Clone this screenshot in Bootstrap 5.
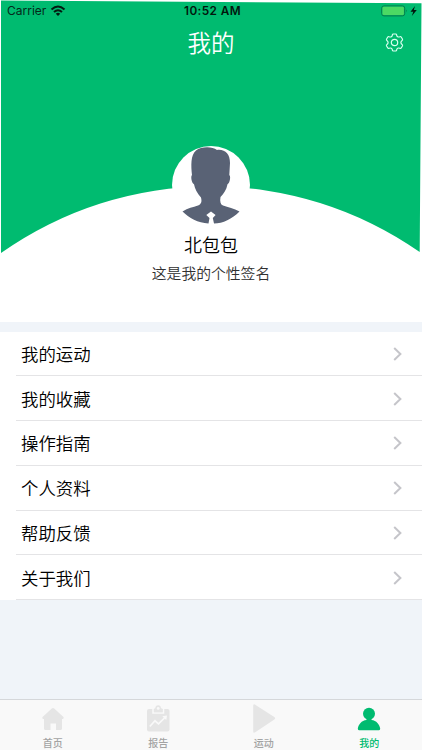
<!DOCTYPE html>
<html lang="zh-CN">
<head>
<meta charset="utf-8">
<meta name="viewport" content="width=device-width, initial-scale=1">
<title>我的</title>
<link href="https://cdn.jsdelivr.net/npm/bootstrap@5.3.0/dist/css/bootstrap.min.css" rel="stylesheet">
<style>
body{font-family:"Noto Sans CJK SC",sans-serif;background:#f0f4f9;color:#000;height:750px;overflow:hidden}
.screen{height:750px}
.hero{height:321.5px;background:#fff}
.hero-bg{left:0;top:0;z-index:0}
.hero>*:not(.hero-bg){position:relative;z-index:1}
.status{height:22px;font-family:Inter,sans-serif;font-size:12px;line-height:22px;color:#04291a;padding:0 4px 0 7px}
.status>div{flex:1 1 0}
.clock{font-weight:600;font-size:11.8px;letter-spacing:.4px;color:#02170e}
.titlebar{height:41px;padding:0 18px}
.titlebar>*{flex:1 1 0}
.page-title{font-size:23.5px;font-weight:350;line-height:41px;color:#fff}
.avatar{width:78px;height:78px;margin-top:83px}
.nick{font-size:18px;font-weight:350;line-height:26px;margin-top:7px}
.sign{font-size:14.8px;font-weight:350;line-height:22px;color:#303030;margin-top:5px}
.menu{margin-top:10px;background:#fff;border-radius:0}
.menu-row{height:44.8px;padding:0 20px 0 21px;font-size:17.4px;font-weight:350;line-height:26px;background:linear-gradient(#e4e4e6,#e4e4e6) 16px 100%/100% 1px no-repeat #fff;border:0;color:#000}
.tabs{height:51px;background:#f9f9f9;border-top:1px solid #d5d7da}
.tab-item{flex:1 1 0;color:#a3a3a3;font-size:10px;line-height:14px;font-weight:500;text-decoration:none}
.tab-item svg{display:block;margin-top:3px;color:#e5e5e5}
.tab-item span{margin-top:3px}
.tab-item.on,.tab-item.on svg{color:#00bb70}
</style>
<script src="https://cdn.jsdelivr.net/npm/bootstrap@5.3.0/dist/js/bootstrap.bundle.min.js"></script>
</head>
<body>
<main class="screen d-flex flex-column">
<header class="hero position-relative d-flex flex-column align-items-stretch">
<svg class="hero-bg position-absolute" width="422" height="322" viewBox="0 0 422 322"><path d="M1 .5 421.5 3.3 419.7 252A364 364 0 0 0 1 253Z" fill="#00bb70"/></svg>
<div class="status d-flex align-items-center">
<div class="d-flex align-items-center"><span>Carrier</span>
<svg class="ms-1" width="16" height="12" viewBox="0 0 16 12" fill="none" stroke="#031b11" stroke-width="2"><path d="M1.500 4.400Q8-1.500 14.500 4.400M4 7Q8 3.400 12 7"/><path d="M5.800 8.700Q8 7 10.200 8.700L8 11Z" fill="#031b11" stroke="none"/></svg></div>
<div class="clock text-center text-nowrap">10:52 AM</div>
<div class="d-flex justify-content-end align-items-center">
<svg width="37" height="12" viewBox="0 0 37 12"><rect x=".7" y=".9" width="23" height="10" rx="2.300" fill="none" stroke="#087b49"/><rect x="1.500" y="1.700" width="21.400" height="8.400" rx="1.300" fill="#4cd964"/><path d="M25 4.300q1.500 1.600 0 3.200z" fill="#087b49"/><path d="M34 1 29.500 6.700h2.800L30.800 11l5-5.900h-3z" fill="#02170e"/></svg></div>
</div>
<div class="titlebar d-flex align-items-center">
<span></span><h1 class="page-title text-center m-0">我的</h1>
<div class="d-flex justify-content-end"><svg width="19" height="19" viewBox="0 0 19 19" fill="none" stroke="#d8fff0" stroke-width="1.200" stroke-linejoin="round"><path d="M8.300 1H10.700Q11.500 1 11.600 1.900C11.800 3.700 13.200 4.500 14.800 3.700Q15.700 3.200 16.200 4L17.400 6Q17.900 6.900 17.100 7.400C15.500 8.600 15.500 10.400 17.100 11.600Q17.900 12.100 17.400 13L16.200 15Q15.700 15.800 14.800 15.300C13.200 14.500 11.800 15.300 11.600 17.100Q11.500 18 10.700 18H8.300Q7.500 18 7.400 17.100C7.200 15.300 5.800 14.500 4.200 15.300Q3.300 15.800 2.800 15L1.600 13Q1.100 12.100 1.900 11.600C3.500 10.400 3.500 8.600 1.900 7.400Q1.100 6.900 1.600 6L2.800 4Q3.300 3.200 4.200 3.700C5.800 4.500 7.200 3.700 7.400 1.900Q7.500 1 8.300 1Z"/><circle cx="9.500" cy="9.500" r="3.200"/></svg></div>
</div>
<div class="avatar align-self-center"><svg class="d-block" width="78" height="78" viewBox="0 0 78 78"><circle cx="39" cy="39" r="39" fill="#fff"/><path fill="#596275" d="M20 29C19 20 18.500 9 24 4.500 29 .5 40 .2 45 4 53 3 58 8 58 17L57.300 29C59 30 58 37 55.500 38.300 54.500 44 51.500 48 48.500 51 47.700 55.500 48.500 58.500 51 59.600 56 61.300 62 62.500 67.500 65.500 60 73 51 77.500 42 77.500L40.800 72 43.600 69 39 65.500 34.300 69 37.500 72 36.500 77.500C26 77 17 72 10.500 65.500 16 62 21 61.200 26 59.500 29.500 58 30 55.500 29 51.500 25 47.500 23 43 22 38.300 19.500 37 18.500 30 20 29Z"/></svg></div>
<div class="nick text-center">北包包</div>
<div class="sign text-center">这是我的个性签名</div>
</header>
<nav class="menu list-group list-group-flush">
<a class="menu-row list-group-item d-flex align-items-center justify-content-between"><span>我的运动</span><svg width="9" height="14" viewBox="0 0 9 14" fill="none" stroke="#c5c5ca" stroke-width="2"><path d="M1.200 1 7.400 7 1.200 13"/></svg></a>
<a class="menu-row list-group-item d-flex align-items-center justify-content-between"><span>我的收藏</span><svg width="9" height="14" viewBox="0 0 9 14" fill="none" stroke="#c5c5ca" stroke-width="2"><path d="M1.200 1 7.400 7 1.200 13"/></svg></a>
<a class="menu-row list-group-item d-flex align-items-center justify-content-between"><span>操作指南</span><svg width="9" height="14" viewBox="0 0 9 14" fill="none" stroke="#c5c5ca" stroke-width="2"><path d="M1.200 1 7.400 7 1.200 13"/></svg></a>
<a class="menu-row list-group-item d-flex align-items-center justify-content-between"><span>个人资料</span><svg width="9" height="14" viewBox="0 0 9 14" fill="none" stroke="#c5c5ca" stroke-width="2"><path d="M1.200 1 7.400 7 1.200 13"/></svg></a>
<a class="menu-row list-group-item d-flex align-items-center justify-content-between"><span>帮助反馈</span><svg width="9" height="14" viewBox="0 0 9 14" fill="none" stroke="#c5c5ca" stroke-width="2"><path d="M1.200 1 7.400 7 1.200 13"/></svg></a>
<a class="menu-row list-group-item d-flex align-items-center justify-content-between"><span>关于我们</span><svg width="9" height="14" viewBox="0 0 9 14" fill="none" stroke="#c5c5ca" stroke-width="2"><path d="M1.200 1 7.400 7 1.200 13"/></svg></a>
</nav>
<nav class="tabs d-flex mt-auto">
<a class="tab-item d-flex flex-column align-items-center"><svg width="24" height="30" viewBox="0 0 24 30" fill="currentColor"><path d="M10.800 5.500Q12 4.400 13.200 5.500L22.500 14Q23.400 15.500 21.700 16H21V25.500Q21 27 19.500 27H15V20.500H9.500V27H4.500Q3 27 3 25.500V16H2.300Q.6 15.500 1.500 14Z"/></svg><span>首页</span></a>
<a class="tab-item d-flex flex-column align-items-center"><svg width="24" height="30" viewBox="0 0 24 30"><rect x="1" y="6" width="22.500" height="22.500" rx="2" fill="currentColor"/><path d="M7 5.500V10H17.500V5.500" fill="none" stroke="#f9f9f9" stroke-width="1.500"/><path d="M8 9.200V6.500Q8 5.300 9.200 5.300 9.500 2.300 12.200 2.300T15 5.300Q16.500 5.300 16.500 6.500V9.200Z" fill="currentColor"/><circle cx="12.200" cy="5.400" r="1.400" fill="#f9f9f9"/><path d="M3.800 23.500 9 17.800 12.500 20.800 19.500 14" stroke="#f9f9f9" stroke-width="1.700" fill="none"/><path d="M16.300 13.200 21 12.500 20.300 17Z" fill="#f9f9f9"/></svg><span>报告</span></a>
<a class="tab-item d-flex flex-column align-items-center"><svg width="24" height="30" viewBox="0 0 24 30" fill="currentColor"><path d="M1.200 2.800Q1.200.5 3.200 1.700L22.300 14Q24 15.400 22.300 16.600L3.200 29.300Q1.200 30.500 1.200 28.200Z"/></svg><span>运动</span></a>
<a class="tab-item on d-flex flex-column align-items-center"><svg width="24" height="30" viewBox="0 0 24 30" fill="currentColor"><circle cx="12" cy="10.800" r="6"/><path d="M9.500 15H14.500V17C19.500 17.500 22.500 21.500 23.200 25.500Q23.300 27.200 22 27.200H2Q.7 27.200.8 25.500C1.500 21.500 4.500 17.500 9.500 17Z"/></svg><span>我的</span></a>
</nav>
</main>
</body>
</html>
